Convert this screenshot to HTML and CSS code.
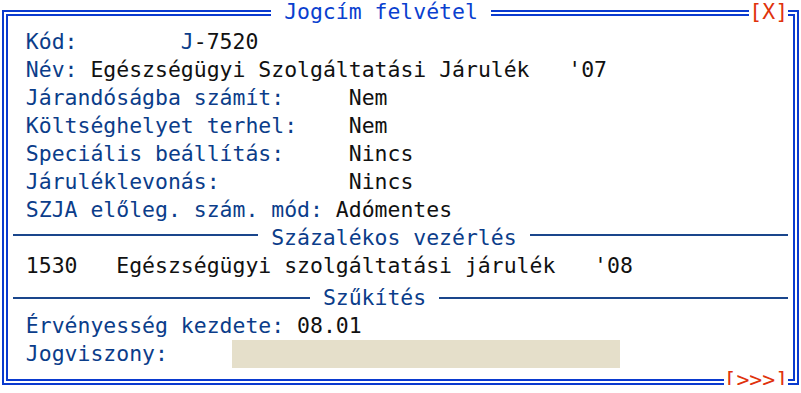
FILE: index.html
```html
<!DOCTYPE html>
<html lang="hu">
<head>
  <meta charset="UTF-8">
  <title>Jogcím felvétel</title>
  <link rel="stylesheet" href="styles.css">
</head>
<body>

  <div class="frame">
    <div class="frame-head">
      <span class="frame-title">Jogcím felvétel</span>
      <span class="btn">[X]</span>
    </div>

    <div class="row"><span class="lbl">Kód:</span>        <span class="lbl">J</span>-7520</div>
    <div class="row"><span class="lbl">Név:</span> Egészségügyi Szolgáltatási Járulék   '07</div>
    <div class="row"><span class="lbl">Járandóságba számít:</span>     Nem</div>
    <div class="row"><span class="lbl">Költséghelyet terhel:</span>    Nem</div>
    <div class="row"><span class="lbl">Speciális beállítás:</span>     Nincs</div>
    <div class="row"><span class="lbl">Járuléklevonás:</span>          Nincs</div>
    <div class="row"><span class="lbl">SZJA előleg. szám. mód:</span> Adómentes</div>

    <div class="sep sep-top">
      <span class="rule rule-19"></span>
      <span class="sep-title">Százalékos vezérlés</span>
      <span class="rule"></span>
    </div>

    <div class="row">1530   Egészségügyi szolgáltatási járulék   '08</div>

    <div class="sep sep-mid">
      <span class="rule rule-23"></span>
      <span class="sep-title">Szűkítés</span>
      <span class="rule"></span>
    </div>

    <div class="row"><span class="lbl">Érvényesség kezdete:</span> 08.01</div>
    <div class="row"><span class="lbl">Jogviszony:</span>     <span class="field"></span></div>

    <div class="frame-foot">
      <span class="btn">[&gt;&gt;&gt;]</span>
    </div>
  </div>

</body>
</html>
```

FILE: styles.css
```css
body {
  margin: 0;
  background-color: #fff;
  overflow: hidden;
  font-family: 'DejaVu Sans Mono', monospace;
  font-size: 21.46px; /* 1ch = 12.92px, 62 oszlop */
  color: #111;
}

.frame {
  width: 797px;
  box-sizing: border-box;
  margin: 10px 0 0 2px;
  padding: 0 4.9px 0 4.92px;
  border: 6px double #0a3acf;
}

.frame-head,
.frame-foot {
  display: flex;
}

.frame-head {
  height: 28px;
  line-height: 28px;
  margin: -18px 0 2px;
}

.frame-foot {
  height: 24px;
  line-height: 24px;
  margin-bottom: -13px;
}

.frame-title {
  margin-left: 20ch;
  padding: 0 1ch;
  background-color: #fff;
  color: #0a3fcf;
  white-space: pre;
}

.btn {
  margin-left: auto;
  background-color: #fff;
  color: #e0320c;
  white-space: pre;
}

.row {
  height: 28px;
  line-height: 28px;
  padding-left: 1ch;
  white-space: pre;
}

.lbl {
  color: #0b3d8a;
}

.sep {
  display: flex;
  align-items: center;
  height: 28px;
  line-height: 28px;
}

.sep-mid {
  margin-top: 4px;
}

.rule {
  flex: 1;
  height: 0;
  border-top: 2px solid #1a468c;
}

.sep-top .rule {
  margin-bottom: 6px;
}

.rule-19 {
  flex: none;
  width: 19ch;
}

.rule-23 {
  flex: none;
  width: 23ch;
}

.sep-title {
  padding: 0 1ch;
  color: #0b3d8a;
  white-space: pre;
}

.field {
  display: inline-block;
  width: 30ch;
  height: 28px;
  vertical-align: top;
  background-color: #e5dfca;
}
```
